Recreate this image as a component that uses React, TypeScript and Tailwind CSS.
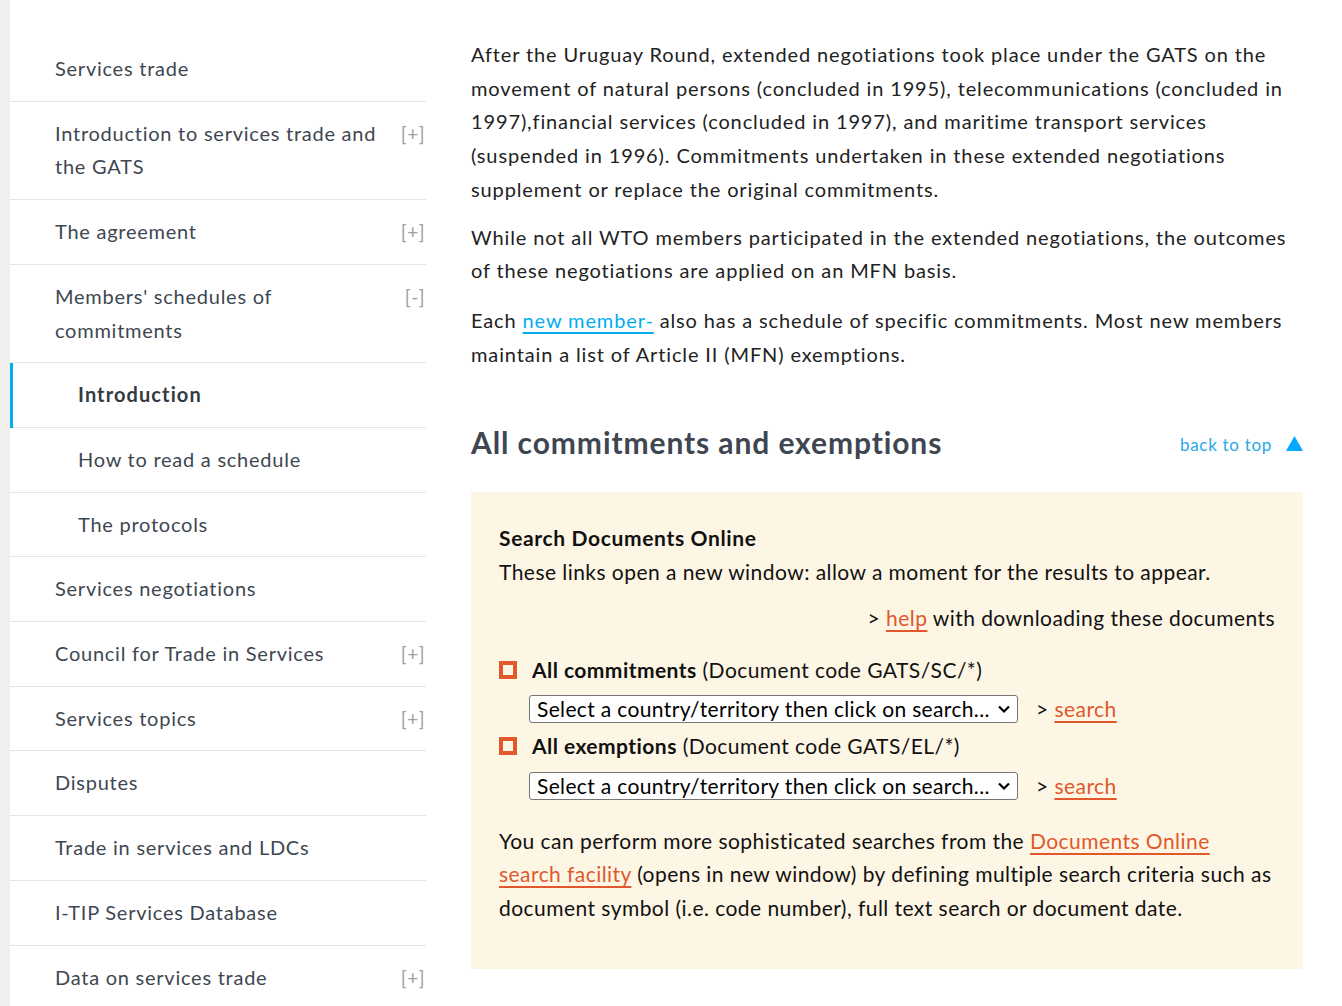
import React from "react";

const navItems: { label: string; sign?: string; indent?: boolean; active?: boolean }[] = [
  { label: "Services trade" },
  { label: "Introduction to services trade and the GATS", sign: "[+]" },
  { label: "The agreement", sign: "[+]" },
  { label: "Members' schedules of commitments", sign: "[-]" },
  { label: "Introduction", indent: true, active: true },
  { label: "How to read a schedule", indent: true },
  { label: "The protocols", indent: true },
  { label: "Services negotiations" },
  { label: "Council for Trade in Services", sign: "[+]" },
  { label: "Services topics", sign: "[+]" },
  { label: "Disputes" },
  { label: "Trade in services and LDCs" },
  { label: "I-TIP Services Database" },
  { label: "Data on services trade", sign: "[+]" },
];

function Checkbox() {
  return <span className="inline-block w-[18px] h-[18px] border-[4px] border-[#e0582c] shrink-0" />;
}

function FakeSelect() {
  return (
    <div className="flex items-center justify-between w-[489px] h-[28px] bg-white border border-[#767676] rounded-[3px] pl-[7px] pr-[6px] text-[21px] leading-[26px] tracking-[0.35px] text-black overflow-hidden whitespace-nowrap">
      <span>Select a country/territory then click on search...</span>
      <svg width="14" height="10" viewBox="0 0 14 10" className="shrink-0 ml-1">
        <path d="M2 2.5 L7 7.5 L12 2.5" fill="none" stroke="#000" strokeWidth="2.2" />
      </svg>
    </div>
  );
}

const orangeLink = "text-[#e0582c] underline decoration-[2px] underline-offset-[4px]";

export default function App() {
  const font = { fontFamily: "Lato, 'Open Sans', sans-serif" };
  return (
    <div className="flex min-h-[1006px] bg-white font-normal" style={font}>
      <div className="w-[10px] shrink-0 bg-[#f0efed]" />
      <aside className="w-[416px] shrink-0 pt-[37px]">
        {navItems.map((it, i) => (
          <div
            key={i}
            className={
              "relative flex items-start justify-between py-[15px] text-[20px] leading-[33.7px] " +
              (i < navItems.length - 1 ? "border-b border-[#e5e5e5] " : "") +
              (it.indent ? "pl-[68px] " : "pl-[45px] ")
            }
          >
            {it.active && <span className="absolute left-0 top-0 bottom-[-1px] w-[3px] bg-[#00aeef]" />}
            <span
              className={
                (it.indent ? "w-[312px] " : "w-[335px] ") +
                (it.active ? "font-bold text-[#333a42] tracking-[1.1px]" : "text-[#3e4751] tracking-[0.75px]")
              }
            >
              {it.label}
            </span>
            {it.sign && <span className="text-[#a0a0a0] text-[19px] tracking-[0.5px] pr-[1px]">{it.sign}</span>}
          </div>
        ))}
      </aside>
      <main className="ml-[45px] w-[832px] shrink-0 pt-[38px] text-[20px] leading-[33.7px] text-[#222] tracking-[0.87px]">
        <p className="mb-[14px]">
          After the Uruguay Round, extended negotiations took place under the GATS on the movement of natural persons
          (concluded in 1995), telecommunications (concluded in 1997),financial services (concluded in 1997), and
          maritime transport services (suspended in 1996). Commitments undertaken in these extended negotiations
          supplement or replace the original commitments.
        </p>
        <p className="mb-[16px]">
          While not all WTO members participated in the extended negotiations, the outcomes of these negotiations are
          applied on an MFN basis.
        </p>
        <p>
          Each{" "}
          <a className="text-[#00aeef] underline decoration-[1.5px] underline-offset-[4px]">new member-</a> also has a
          schedule of specific commitments. Most new members maintain a list of Article II (MFN) exemptions.
        </p>
        <div className="flex items-center justify-between mt-[51px] h-[40px]">
          <h2 className="text-[30px] leading-[40px] font-bold text-[#3d4651] tracking-[0.9px]">
            All commitments and exemptions
          </h2>
          <div className="flex items-center gap-[14px] pt-[6px]">
            <span className="text-[17px] text-[#29a8e8] tracking-[0.7px]">back to top</span>
            <svg width="17" height="15" viewBox="0 0 17 15" className="mb-[4px]">
              <polygon points="8.5,0 17,15 0,15" fill="#00aaff" />
            </svg>
          </div>
        </div>
        <div className="mt-[30px] bg-[#fdf6e4] pl-[28px] pr-[28px] pt-[29px] pb-[45px] text-[#111] text-[21px] leading-[33.5px] tracking-[0.45px]">
          <p className="font-bold tracking-[0.65px]">Search Documents Online</p>
          <p>These links open a new window: allow a moment for the results to appear.</p>
          <p className="text-right mt-[13px]">
            &gt; <a className={orangeLink}>help</a> with downloading these documents
          </p>
          <div className="mt-[18px]">
            <div className="flex items-center gap-[15px] h-[34px]">
              <Checkbox />
              <span>
                <b className="font-bold">All commitments</b> (Document code GATS/SC/*)
              </span>
            </div>
            <div className="flex items-center ml-[30px] mt-[8px] mb-[6px] h-[28px]">
              <FakeSelect />
              <span className="ml-[18px]">
                &gt; <a className={orangeLink}>search</a>
              </span>
            </div>
            <div className="flex items-center gap-[15px] h-[34px]">
              <Checkbox />
              <span>
                <b className="font-bold">All exemptions</b> (Document code GATS/EL/*)
              </span>
            </div>
            <div className="flex items-center ml-[30px] mt-[9px] h-[28px]">
              <FakeSelect />
              <span className="ml-[18px]">
                &gt; <a className={orangeLink}>search</a>
              </span>
            </div>
          </div>
          <p className="mt-[24px]">
            You can perform more sophisticated searches from the{" "}
            <a className={orangeLink}>Documents Online search facility</a> (opens in new window) by defining multiple
            search criteria such as document symbol (i.e. code number), full text search or document date.
          </p>
        </div>
      </main>
    </div>
  );
}
